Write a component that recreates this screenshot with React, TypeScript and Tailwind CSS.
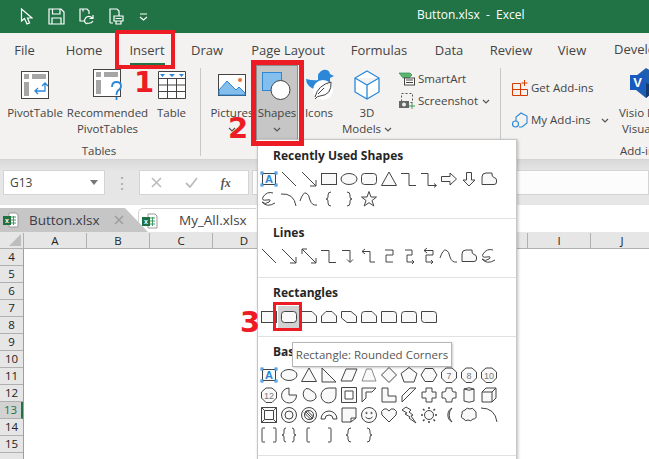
import type { ReactNode } from 'react';

const ui = '[font-family:"Open_Sans","Noto_Sans",sans-serif]';
const callout = "absolute text-[29px] leading-[34px] font-bold text-[#ed1c24] [font-family:'DejaVu_Sans',sans-serif]";

const tabs: [string, number][] = [
  ['File', 43],
  ['Home', 76],
  ['Insert', 50],
  ['Draw', 70],
  ['Page Layout', 92],
  ['Formulas', 90],
  ['Data', 50],
  ['Review', 74],
  ['View', 48],
];

function Chev({ className = '' }: { className?: string }) {
  return (
    <svg width="8" height="5" viewBox="0 0 8 5" className={className}>
      <path d="M1 1l3 3 3-3" fill="none" stroke="#555" strokeWidth="1.2" />
    </svg>
  );
}

// one glyph of the shapes gallery, drawn in a 20x20 box
function Shape({ children, hot }: { children: ReactNode; hot?: boolean }) {
  return (
    <div className={`flex items-center justify-center ${hot ? '-mx-px -my-px h-[22px] w-[22px] bg-[#d2d2d2]' : 'h-5 w-5'}`}>
      <svg width="20" height="20" viewBox="0 0 20 20" fill="#f9f9f9" stroke="#444" strokeWidth="1">
        {children}
      </svg>
    </div>
  );
}

const P = ({ d, n }: { d: string; n?: boolean }) => <path d={d} fill={n ? 'none' : undefined} />;

const TextBox = (
  <>
    <rect x="3.5" y="4.5" width="13" height="11" />
    <g fill="#fff" stroke="#2b88d8">
      <rect x="2" y="3" width="2" height="2" />
      <rect x="16" y="3" width="2" height="2" />
      <rect x="2" y="15" width="2" height="2" />
      <rect x="16" y="15" width="2" height="2" />
    </g>
    <text x="10" y="14" textAnchor="middle" fontSize="11" fontWeight="700" fill="#2b88d8" stroke="none" fontFamily="Liberation Sans">A</text>
  </>
);
const Line = <P n d="M3 3L17 17" />;
const Arrow = <P n d="M3 3L17 17M17 11V17H11" />;
const Rect = <rect x="2.5" y="4.5" width="15" height="11" />;
const Oval = <ellipse cx="10" cy="10" rx="8" ry="5.5" />;
const Round = <rect x="2.5" y="4.5" width="15" height="11" rx="3" />;
const Tri = <P d="M10 3L17.5 16.5H2.500Z" />;
const Elbow = <P n d="M2 4.500H10V16.500H17" />;
const ElbowArrow = <P n d="M2 4.500H9V16.500H17M15 14.500l2.500 2-2.500 2" />;
const RightArrow = <P d="M2.500 7.500H11V4L17.500 10L11 16V12.500H2.500Z" />;
const DownArrow = <P d="M7.500 3.500H12.500V11H16L10 17L4 11H7.500Z" />;
const Free = <P d="M3 15.500V8Q3 4 7 4H13Q12.500 8 15 8.500Q17.500 9 17.500 11V13Q17.500 15.500 15 15.500Z" />;
const Scribble = <P n d="M14 4Q8 2 4 8Q2 12 8 11Q13 10 10 13Q6 16 3 13Q8 19 16 14" />;
const Arc = <P n d="M2 5Q15 4 17 17" />;
const Curve = <P n d="M1 12Q4 3 7 4Q10 5 11 11Q13 17 18 16" />;
const BraceL = <P n d="M12 3Q9 3 9 6V8Q9 10 7 10Q9 10 9 12V14Q9 17 12 17" />;
const BraceR = <P n d="M8 3Q11 3 11 6V8Q11 10 13 10Q11 10 11 12V14Q11 17 8 17" />;
const Star = <P d="M10 2.500L12 8H17.500L13 11.500L14.800 17L10 13.700L5.200 17L7 11.500L2.500 8H8Z" />;

const recent = [TextBox, Line, Arrow, Rect, Oval, Round, Tri, Elbow, ElbowArrow, RightArrow, DownArrow, Free, Scribble, Arc, Curve, BraceL, BraceR, Star];

const lines = [
  Line,
  Arrow,
  <P n d="M3 3L17 17M3 8V3H8M17 12V17H12" />,
  Elbow,
  <P n d="M3 4.500H11V16M8 13.500l3 3 3-3" />,
  <P n d="M6 3L3 5.500L6 8M3 5.500H11V16H16" />,
  <P n d="M6 4H14V9H7V16H14" />,
  <P n d="M6 4H13V9H8V16H15M13 14l2 2-2 2" />,
  <P n d="M8 2L5 4.500L8 7M5 4.500H14V9H7V16H14M12 14l2 2-2 2" />,
  Curve,
  Free,
  Scribble,
];

const rectangles = [
  Rect,
  Round,
  <P d="M2.500 4.500H13L17.500 9V15.500H2.500Z" />,
  <P d="M7 4.500H13L17.500 9V15.500H2.500V9Z" />,
  <P d="M2.500 4.500H12L17.500 9V15.500H8L2.500 11Z" />,
  <P d="M5.500 4.500H13L17.500 9V15.500H2.500V7.500Q2.500 4.500 5.500 4.500Z" />,
  <P d="M2.500 4.500H14.500Q17.500 4.500 17.500 7.500V15.500H2.500Z" />,
  <P d="M5.500 4.500H14.500Q17.500 4.500 17.500 7.500V15.500H2.500V7.500Q2.500 4.500 5.500 4.500Z" />,
  <P d="M2.500 4.500H14.500Q17.500 4.500 17.500 7.500V15.500H5.500Q2.500 15.500 2.500 12.500Z" />,
];

const Oct = ({ t }: { t: string }) => (
  <>
    <P d="M7 3H13L17.500 7V13L13 17.500H7L2.500 13V7Z" />
    <text x="10" y="13.500" textAnchor="middle" fontSize="9" fill="#777" stroke="none" fontFamily="Liberation Sans">{t}</text>
  </>
);

const basic = [
  TextBox,
  <ellipse cx="10" cy="10" rx="8" ry="5.500" />,
  Tri,
  <P d="M3 3V17H17Z" />,
  <P d="M7 4H18L13 16H2Z" />,
  <path d="M7.500 4H12.500L17 16H3Z" stroke="#8a8a8a" />,
  <P d="M10 2.500L17.500 10L10 17.500L2.500 10Z" />,
  <P d="M10 2.500L18 8.500L15 17H5L2 8.500Z" />,
  <P d="M6 3.500H14L18 10L14 16.500H6L2 10Z" />,
  <Oct t="7" />,
  <Oct t="8" />,
  <Oct t="10" />,
  <Oct t="12" />,
  <P d="M10 3A7.500 7.500 0 1 0 17.500 10H10Z" />,
  <P d="M7 3.500A7 7 0 1 0 17 13Q17.500 8 13 6Q10 3 7 3.500Z" />,
  <P d="M17 3H10A7.500 7.500 0 1 0 17 10Z" />,
  <P d="M2.500 2.500H17.500V17.500H2.500ZM6 6V14H14V6Z" />,
  <P d="M3 17V3H17L13 7H7V13Z" />,
  <P d="M3 3H9V11H17V17H3Z" />,
  <P d="M3 17V11L11 3H17Z" />,
  <P d="M7 3H13V7H17V13H13V17H7V13H3V7H7Z" />,
  <P d="M7 3H13V5Q13 7 15 7H17V13H15Q13 13 13 15V17H7V15Q7 13 5 13H3V7H5Q7 7 7 5Z" />,
  <P d="M5 4Q10 1.500 15 4V16Q10 18.500 5 16ZM5 4Q10 6.500 15 4" />,
  <P d="M3 7H13V17H3ZM3 7L7 3H17V13L13 17M13 7L17 3" />,
  <P d="M2.500 2.500H17.500V17.500H2.500ZM5.500 5.500V14.500H14.500V5.500ZM2.500 2.500L5.500 5.500M17.500 2.500L14.500 5.500M2.500 17.500L5.500 14.500M17.500 17.500L14.500 14.500" />,
  <>
    <circle cx="10" cy="10" r="7.500" />
    <circle cx="10" cy="10" r="4" />
  </>,
  <>
    <circle cx="10" cy="10" r="7.500" />
    <circle cx="10" cy="10" r="4.500" />
    <path d="M6 6L14 14M7.500 5L15 12.500M5 7.500L12.500 15" />
  </>,
  <P d="M2 14A8 8 0 0 1 18 14H14A4 4 0 0 0 6 14Z" />,
  <P d="M3 3H17V13L12 17H3ZM12 17V13H17" />,
  <>
    <circle cx="10" cy="10" r="7.500" />
    <circle cx="7.500" cy="8" r="0.700" />
    <circle cx="12.500" cy="8" r="0.700" />
    <path d="M6.500 12Q10 15.500 13.500 12" fill="none" />
  </>,
  <P d="M10 17L3 10Q1 6 5 4Q8 3 10 6Q12 3 15 4Q19 6 17 10Z" />,
  <P d="M7 2L12 5L10 7L14 10L12 11L17 18L10 13L11 12L6 9L8 8L3 5Z" />,
  <>
    <circle cx="10" cy="10" r="4.500" />
    <path d="M10 2V4M10 16V18M2 10H4M16 10H18M4 4L5.500 5.500M14.500 14.500L16 16M16 4L14.500 5.500M4 16L5.500 14.500" fill="none" strokeWidth="1.500" />
  </>,
  <P d="M13 3A8 8 0 0 0 13 17A10 10 0 0 1 13 3Z" />,
  <P d="M6 5Q8 2 11 4Q14 2 15 5Q18 6 17 10Q18 14 14 14Q12 17 9 15Q6 17 5 14Q1 13 3 9Q2 6 6 5Z" />,
  <P n d="M2 3Q16 3 18 17" />,
  <P n d="M6 3H3.500Q3 3 3 4V16Q3 17 3.500 17H6M14 3H16.500Q17 3 17 4V16Q17 17 16.500 17H14" />,
  <P n d="M7 3Q5 3 5 5V8Q5 10 3 10Q5 10 5 12V15Q5 17 7 17M13 3Q15 3 15 5V8Q15 10 17 10Q15 10 15 12V15Q15 17 13 17" />,
  <P n d="M11 3H9Q8 3 8 4V16Q8 17 9 17H11" />,
  <P n d="M9 3H11Q12 3 12 4V16Q12 17 11 17H9" />,
  BraceL,
  BraceR,
];

function Gallery({ title, items, hot, pt, mt = 'mt-[4px]', pb }: { title: string; items: ReactNode[]; hot?: number; pt: string; mt?: string; pb: string }) {
  return (
    <section className={`border-b border-[#e1e1e1] ${pt} ${pb}`}>
      <h3 className="h-[18px] pl-[15px] text-[12px] leading-[18px] font-bold text-[#262626]">{title}</h3>
      <div className={`${mt} grid grid-cols-[repeat(12,20px)] pl-px`}>
        {items.map((s, i) => (
          <Shape key={i} hot={i === hot}>{s}</Shape>
        ))}
      </div>
    </section>
  );
}

function RibbonBtn({ w, icon, label, label2, chev, className = '' }: { w: string; icon: ReactNode; label: string; label2?: ReactNode; chev?: boolean; className?: string }) {
  return (
    <div className={`flex shrink-0 flex-col items-center ${w} ${className}`}>
      <div className="flex h-[34px] items-center">{icon}</div>
      <div className="mt-[3px] h-[16px] text-[11.5px] leading-[16px] whitespace-nowrap text-[#444]">{label}</div>
      <div className="h-[16px] text-[11.5px] leading-[16px] whitespace-nowrap text-[#444]">
        {label2}
        {label2 && chev ? ' ' : ''}
        {chev && <Chev className="inline" />}
      </div>
    </div>
  );
}

function ExcelMark() {
  return (
    <svg width="16" height="16" viewBox="0 0 16 16" className="shrink-0">
      <path d="M6 1H13L15 3V15H6Z" fill="#fff" stroke="#9a9a9a" />
      <path d="M8 5H13M8 8H13M8 11H13M10.500 4V13" stroke="#3c9a63" />
      <rect x="0" y="4" width="8" height="9" fill="#1e7145" />
      <text x="4" y="11" textAnchor="middle" fontSize="7" fontWeight="700" fill="#fff" fontFamily="Liberation Sans">x</text>
    </svg>
  );
}

const rows = [4, 5, 6, 7, 8, 9, 10, 11, 12, 13, 14, 15];
const cols = ['A', 'B', 'C', 'D', 'E', 'F', 'G', 'H', 'I', 'J'];

export default function App() {
  return (
    <div className={`relative h-[459px] w-[649px] overflow-hidden bg-white ${ui}`}>
      {/* title bar */}
      <header className="relative flex h-[33px] items-center bg-[#217346] pl-[20px] text-white">
        <svg width="13" height="17" viewBox="0 0 13 17" fill="none" stroke="#fff" strokeWidth="1.200">
          <path d="M1.500 1V13L4.500 10.500L7 16L9.500 15L7.500 10H12Z" />
        </svg>
        <svg width="17" height="17" viewBox="0 0 17 17" fill="none" stroke="#fff" strokeWidth="1.200" className="ml-[15px]">
          <path d="M1 1H13L16 4V16H1ZM4.500 1V6H12V1M4 16V10H13V16" />
        </svg>
        <svg width="16" height="17" viewBox="0 0 16 17" fill="none" stroke="#fff" strokeWidth="1.200" className="ml-[14px]">
          <path d="M5 13H1V1H8L10 3V6M4 3.500V1M8 16Q4 14 6.500 10Q9 7.500 12 9L14 10.500M14 7V10.500H10.500M14 13Q12 16 8 15" />
        </svg>
        <svg width="15" height="17" viewBox="0 0 15 17" fill="none" stroke="#fff" strokeWidth="1.200" className="ml-[14px]">
          <path d="M1 15H4M1 15V1H8L10 3V8M5 8H14V13H5ZM7 13V16H12V13M6.500 10.500H12.500" />
        </svg>
        <svg width="9" height="8" viewBox="0 0 9 8" fill="none" stroke="#fff" strokeWidth="1.200" className="ml-[15px]">
          <path d="M1 1H8M1 4L4.500 7L8 4" />
        </svg>
        <div className="absolute top-[6px] left-[417px] text-[12px] leading-[18px] whitespace-pre">Button.xlsx  -  Excel</div>
      </header>

      {/* tabs */}
      <nav className="flex h-[34px] items-center bg-[#f3f2f1] pl-[3px] text-[13px] text-[#444]">
        {tabs.map(([t, w]) => (
          <div key={t} style={{ width: w }} className="relative shrink-0 text-center leading-[30px]">
            {t}
            {t === 'Insert' && <span className="absolute right-[7px] bottom-[-1px] left-[8px] h-[3px] bg-[#217346]" />}
          </div>
        ))}
        <div className="pl-[18px] whitespace-nowrap">Developer</div>
      </nav>

      {/* ribbon */}
      <div className="flex h-[93px] items-start border-b border-[#d4d4d4] bg-[#f3f2f1] pt-px">
        <div className="flex w-[200px] shrink-0 flex-col pl-[5px]">
          <div className="flex h-[76px]">
            <RibbonBtn
              w="w-[60px]"
              label="PivotTable"
              icon={
                <svg width="28" height="28" viewBox="0 0 28 28">
                  <rect x="0.500" y="0.500" width="27" height="27" fill="#fff" stroke="#444" />
                  <path d="M3 3H8V8H3ZM11 3H25V8H11ZM3 11H8V25H3Z" fill="#a6a6a6" />
                  <path d="M14 20H24V12M21 15L24 12L27 15M17 17L14 20L17 23" fill="none" stroke="#2b88d8" strokeWidth="1.300" />
                </svg>
              }
            />
            <RibbonBtn
              w="w-[85px]"
              label="Recommended"
              label2="PivotTables"
              icon={
                <svg width="30" height="32" viewBox="0 0 30 32">
                  <rect x="0.500" y="0.500" width="27" height="27" fill="#fff" stroke="#444" />
                  <path d="M3 3H8V8H3ZM11 3H25V8H11ZM3 11H8V25H3Z" fill="#a6a6a6" />
                  <path d="M19 18Q19 13 23.500 13Q28 13 28 17Q28 20 25 21.500Q23.500 23 23.500 26M23.500 28V31" fill="none" stroke="#2b88d8" strokeWidth="1.800" />
                </svg>
              }
            />
            <RibbonBtn
              w="w-[43px]"
              label="Table"
              icon={
                <svg width="28" height="28" viewBox="0 0 28 28">
                  <path d="M.5.500H27.500V27.500H.5Z" fill="#fff" stroke="#444" />
                  <path d="M2 3H7L4.500 6ZM11 3H17L14 6ZM21 3H26L23.500 6Z" fill="#2b88d8" />
                  <path d="M1 7.500H27M1 14H27M1 20.500H27M9.500 7V27M18.500 7V27" stroke="#444" fill="none" />
                </svg>
              }
            />
          </div>
          <div className="w-[188px] text-center text-[11.5px] leading-[14px] text-[#444]">Tables</div>
        </div>
        <div className="h-[88px] w-px shrink-0 bg-[#c8c8c8]" />
        <div className="flex h-[76px] w-[299px] shrink-0 pl-[7px]">
          <RibbonBtn
            w="w-[48px]"
            label="Pictures"
            chev
            icon={
              <svg width="28" height="22" viewBox="0 0 28 22">
                <rect x="0.500" y="0.500" width="27" height="21" fill="#fff" stroke="#444" />
                <path d="M1 16L9 7L18 16L21 13L27 19V21H1Z" fill="#83beec" stroke="#2b88d8" />
                <circle cx="22" cy="6" r="2" fill="#e97132" />
              </svg>
            }
          />
          <RibbonBtn
            w="w-[42px]"
            label="Shapes"
            chev
            icon={
              <svg width="30" height="30" viewBox="0 0 30 30">
                <rect x="0.500" y="2.500" width="19" height="18" fill="#83beec" stroke="#2b88d8" />
                <circle cx="18.500" cy="20" r="9.500" fill="#fff" stroke="#444" />
              </svg>
            }
            className="-mt-[3px] h-[75px] self-start border border-[#8e8e8e] bg-[#c6c6c6] pt-[2px]"
          />
          <RibbonBtn
            w="w-[42px]"
            label="Icons"
            icon={
              <svg width="30" height="32" viewBox="0 0 30 32">
                <path d="M2 10Q10 12 14 11Q13 3 19 1Q25 0 26 5L30 7L26 9Q27 16 20 20Q10 22 5 17Q2 14 2 10Z" fill="#2b88d8" />
                <circle cx="19" cy="21" r="10" fill="#fff" />
                <path d="M11 28Q14 16 27 13Q28 26 16 27Q13 27 11 30M14 25L20 19" fill="none" stroke="#444" />
              </svg>
            }
          />
          <RibbonBtn
            w="w-[54px]"
            label="3D"
            label2="Models"
            chev
            icon={
              <svg width="26" height="30" viewBox="0 0 26 30" fill="#fff" stroke="#2b88d8" strokeWidth="1.300">
                <path d="M13 1L25 8V22L13 29L1 22V8ZM1 8L13 15L25 8M13 15V29" />
              </svg>
            }
          />
          <div className="ml-[5px] flex flex-col gap-[4px] pt-[2px] text-[11.5px] leading-[18px] text-[#444]">
            <div className="flex items-center gap-[3px]">
              <svg width="16" height="14" viewBox="0 0 16 14">
                <path d="M0 1H11L13 3L10 6H4Z" fill="#5bb56e" stroke="#2f8f4e" strokeWidth="0.700" />
                <rect x="5.500" y="6" width="10" height="7" fill="#fff" stroke="#444" />
                <path d="M7 8H14M7 10.500H14" stroke="#444" />
              </svg>
              SmartArt
            </div>
            <div className="flex items-center gap-[3px]">
              <svg width="16" height="16" viewBox="0 0 16 16">
                <rect x="2.500" y="0.500" width="11" height="9" fill="none" stroke="#555" strokeDasharray="2 2" />
                <rect x="0" y="8" width="10" height="7" fill="#666" />
                <circle cx="5" cy="11.500" r="2" fill="#eee" />
                <path d="M10 13H16M13 10V16" stroke="#3a9d5d" />
              </svg>
              Screenshot <Chev className="ml-px inline" />
            </div>
          </div>
        </div>
        <div className="h-[88px] w-px shrink-0 bg-[#c8c8c8]" />
        <div className="flex shrink-0 flex-col pl-[11px]">
          <div className="flex h-[76px]">
            <div className="flex w-[100px] shrink-0 flex-col gap-[12px] pt-[10px] text-[11.5px] leading-[20px] text-[#444]">
              <div className="flex items-center gap-[3px]">
                <svg width="16" height="16" viewBox="0 0 16 16" fill="none" stroke="#d83b01">
                  <path d="M.5 3.500H8.500V15.500H.5ZM.5 9.500H15.500V15.500H8.500M12.500 0V6M9.500 3H15.500" />
                </svg>
                Get Add-ins
              </div>
              <div className="flex items-center gap-[3px]">
                <svg width="16" height="16" viewBox="0 0 16 16" fill="none" stroke="#2b88d8" strokeWidth="1.100">
                  <path d="M4 9V5L9 1L15 4V11L10 15H7" />
                  <circle cx="3.500" cy="12" r="3" />
                </svg>
                My Add-ins <Chev className="ml-[7px] inline" />
              </div>
            </div>
            <div className="ml-[1px] flex w-[48px] shrink-0 flex-col pl-[6px]">
              <svg width="30" height="30" viewBox="0 0 30 30" className="ml-[11px]">
                <path d="M16 0L28 7V20L16 30L6 22V8Z" fill="#1f5fae" />
                <path d="M16 15L28 20L16 30Z" fill="#123a6e" />
                <rect x="0" y="7" width="15" height="15" fill="#185abd" />
                <text x="7.500" y="19" textAnchor="middle" fontSize="13" fontWeight="700" fill="#fff" fontFamily="Liberation Sans">V</text>
              </svg>
              <div className="mt-[7px] text-[11.5px] leading-[16px] whitespace-nowrap text-[#444]">Visio Data</div>
              <div className="pl-[3px] text-[11.5px] leading-[16px] whitespace-nowrap text-[#444]">Visualizer</div>
            </div>
          </div>
          <div className="pl-[108px] text-[11.5px] leading-[14px] whitespace-nowrap text-[#444]">Add-ins</div>
        </div>
      </div>

      {/* name box and formula bar */}
      <div className="flex h-[45px] items-start gap-[3px] bg-gradient-to-b from-[#d9d9d9] from-0% to-[#e6e6e6] to-25% pt-[10px] pl-[3px]">
        <div className="flex h-[25px] w-[102px] items-center justify-between border border-[#d4d4d4] bg-white px-[6px] text-[12px] text-[#444]">
          G13
          <svg width="8" height="5" viewBox="0 0 8 5"><path d="M0 0H8L4 5Z" fill="#777" /></svg>
        </div>
        <div className="flex h-[25px] w-[28px] items-center justify-center text-[#aaa]">⋮</div>
        <div className="flex h-[25px] w-[110px] items-center justify-around border border-[#d4d4d4] bg-white pr-[6px]">
          <svg width="11" height="11" viewBox="0 0 11 11"><path d="M1 1L10 10M10 1L1 10" stroke="#bcbcbc" strokeWidth="1.600" /></svg>
          <svg width="13" height="11" viewBox="0 0 13 11"><path d="M1 6L5 10L12 1" stroke="#bcbcbc" strokeWidth="1.800" fill="none" /></svg>
          <span className="[font-family:'Liberation_Serif',serif] text-[12px] font-bold text-[#555] italic">fx</span>
        </div>
        <div className="h-[25px] flex-1 border border-[#d4d4d4] bg-[#fcfcfc]" />
      </div>

      {/* workbook tabs */}
      <div className="flex h-[27px] items-end bg-white">
        <div className="flex h-[24px] w-[148px] shrink-0 items-center bg-[#c6c6c6] pl-[3px] text-[13.5px] text-[#3b3b4b] [clip-path:polygon(0_0,125px_0,148px_100%,0_100%)]">
          <ExcelMark />
          <span className="ml-[10px]">Button.xlsx</span>
          <svg width="10" height="10" viewBox="0 0 10 10" className="ml-[14px]"><path d="M1 1L9 9M9 1L1 9" stroke="#9d9d9d" strokeWidth="1.500" /></svg>
        </div>
        <div className="ml-[-10px] flex h-[24px] w-[118px] shrink-0 items-center rounded-tl-[5px] border-t border-l border-[#d4d4d4] bg-white pl-[3px] text-[13.5px] text-[#444]">
          <ExcelMark />
          <span className="ml-[21px] whitespace-nowrap">My_All.xlsx</span>
        </div>
      </div>

      {/* sheet */}
      <div className="flex h-[17px] border-y border-[#b0b0b0] border-t-[#e6e6e6] bg-[#e6e6e6] text-[11.5px] leading-[15px] text-[#222]">
        <div className="relative w-[24px] shrink-0 border-r border-[#b0b0b0]">
          <svg width="12" height="12" viewBox="0 0 12 12" className="absolute right-[2px] bottom-[2px]"><path d="M12 0V12H0Z" fill="#bdbdbd" /></svg>
        </div>
        {cols.map(c => (
          <div key={c} className="w-[63px] shrink-0 border-r border-[#b0b0b0] text-center">{c}</div>
        ))}
      </div>
      <div className="w-[24px] border-r border-[#9f9f9f]">
        {rows.map(r => (
          <div
            key={r}
            className={`h-[17px] border-b border-[#b0b0b0] text-center text-[11.5px] leading-[16px] ${r === 13 ? 'border-r-2 border-r-[#217346] bg-[#d2d2d2] text-[#217346]' : 'bg-[#e6e6e6] text-[#222]'}`}
          >
            {r}
          </div>
        ))}
        <div className="h-[6px] bg-[#e6e6e6]" />
      </div>

      {/* shapes dropdown */}
      <div className="absolute top-[139px] left-[257px] h-[330px] w-[260px] border border-[#c6c6c6] bg-white shadow-[1px_1px_3px_rgba(0,0,0,0.25)]">
        <Gallery title="Recently Used Shapes" items={recent} pt="pt-[7px]" pb="pb-[9px]" />
        <Gallery title="Lines" items={lines} pt="pt-[5px]" pb="pb-[11px]" />
        <Gallery title="Rectangles" items={rectangles} hot={1} pt="pt-[6px]" mt="mt-[5px]" pb="pb-[9px]" />
        <Gallery title="Basic Shapes" items={basic} pt="pt-[6px]" pb="pb-[10px]" />
      </div>

      {/* tooltip */}
      <div className="absolute top-[342px] left-[292px] flex h-[25px] w-[160px] items-center justify-center border border-[#b5b5b5] bg-white text-[11.5px] whitespace-nowrap text-[#575757] shadow-[1px_1px_2px_rgba(0,0,0,0.2)]">
        Rectangle: Rounded Corners
      </div>

      {/* red callouts */}
      <div className="absolute top-[30px] left-[115px] h-[39px] w-[60px] border-[4px] border-[#ed1c24]" />
      <div className="absolute top-[60px] left-[251px] h-[86px] w-[53px] border-[5px] border-[#ed1c24]" />
      <div className="absolute top-[302px] left-[273px] h-[29px] w-[29px] border-[3px] border-[#ed1c24]" />
      <span className={`${callout} top-[65px] left-[134px]`}>1</span>
      <span className={`${callout} top-[111px] left-[228px]`}>2</span>
      <span className={`${callout} top-[305px] left-[240px]`}>3</span>
    </div>
  );
}
